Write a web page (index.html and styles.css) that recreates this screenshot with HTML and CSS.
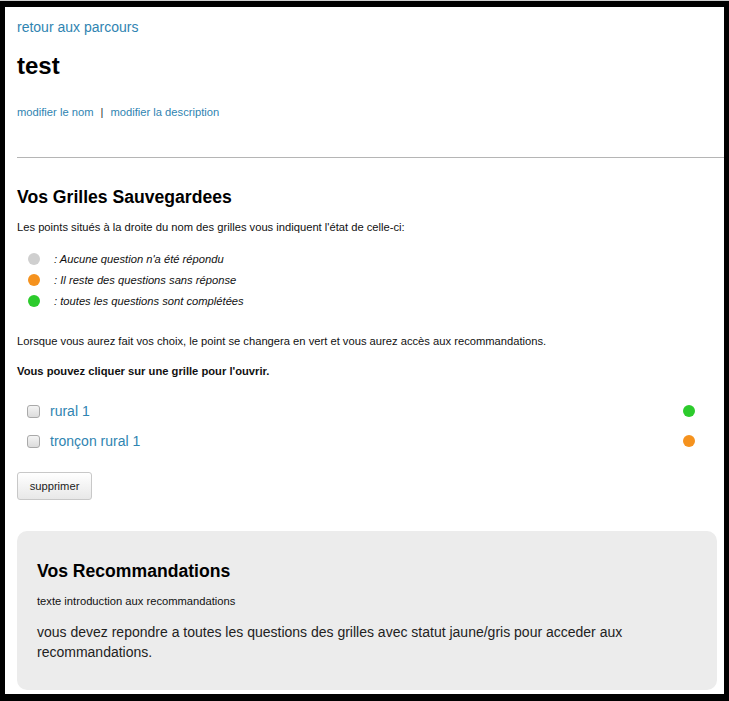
FILE: index.html
```html
<!DOCTYPE html>
<html lang="fr">
<head>
<meta charset="utf-8">
<title>test</title>
<link rel="stylesheet" href="styles.css">
</head>
<body>
<div class="frame">
  <div class="page">
    <a class="back" href="#">retour aux parcours</a>
    <h1 class="title">test</h1>
    <div class="edit-links">
      <a href="#">modifier le nom</a><span class="sep">|</span><a href="#">modifier la description</a>
    </div>
    <hr class="rule">

    <h2 class="section-title">Vos Grilles Sauvegardees</h2>
    <p class="intro">Les points situés à la droite du nom des grilles vous indiquent l'état de celle-ci:</p>
    <ul class="legend">
      <li><span class="dot dot-grey"></span><span class="legend-text">: Aucune question n'a été répondu</span></li>
      <li><span class="dot dot-orange"></span><span class="legend-text">: Il reste des questions sans réponse</span></li>
      <li><span class="dot dot-green"></span><span class="legend-text">: toutes les questions sont complétées</span></li>
    </ul>
    <p class="note">Lorsque vous aurez fait vos choix, le point se changera en vert et vous aurez accès aux recommandations.</p>
    <p class="note strong">Vous pouvez cliquer sur une grille pour l'ouvrir.</p>

    <ul class="grids">
      <li class="grid-row">
        <input type="checkbox" class="check">
        <a class="grid-link" href="#">rural 1</a>
        <span class="dot dot-green"></span>
      </li>
      <li class="grid-row">
        <input type="checkbox" class="check">
        <a class="grid-link" href="#">tronçon rural 1</a>
        <span class="dot dot-orange"></span>
      </li>
    </ul>
    <button class="btn" type="button">supprimer</button>

    <section class="reco">
      <h2 class="reco-title">Vos Recommandations</h2>
      <p class="reco-intro">texte introduction aux recommandations</p>
      <p class="reco-text">vous devez repondre a toutes les questions des grilles avec statut jaune/gris pour acceder aux recommandations.</p>
    </section>
  </div>
</div>
</body>
</html>
```
FILE: styles.css
```css
html {
  background: #cfcfcf;
}
body {
  margin: 0;
  font-family: "Liberation Sans", Arial, sans-serif;
  color: #111;
}
.frame {
  margin-top: 1px;
  border-style: solid;
  border-color: #000;
  border-width: 6px 5px 7px 5px;
  background: #fff;
  height: 687px;
  box-sizing: content-box;
  overflow: hidden;
}
.page {
  padding: 10px 7px 0 12px;
}
a {
  color: #2f84b1;
  text-decoration: none;
}
.back {
  display: block;
  font-size: 14px;
  line-height: 20px;
}
.title {
  margin: 15px 0 0;
  font-size: 24px;
  line-height: 28px;
  font-weight: bold;
  color: #000;
}
.edit-links {
  margin-top: 24px;
  font-size: 11.2px;
  line-height: 16px;
}
.sep {
  color: #333;
  margin: 0 7px;
}
.rule {
  margin: 37px -7px 0 0;
  border: 0;
  height: 1px;
  background: #b5b5b5;
}
.section-title {
  margin: 28px 0 0;
  font-size: 17.6px;
  line-height: 22px;
  font-weight: bold;
  color: #000;
}
.intro {
  margin: 11px 0 0;
  font-size: 11.2px;
  line-height: 16px;
}
.legend {
  list-style: none;
  margin: 13px 0 0;
  padding: 0 0 0 11px;
}
.legend li {
  display: flex;
  align-items: center;
  height: 21px;
  gap: 14px;
}
.legend-text {
  font-size: 11.2px;
  font-style: italic;
  line-height: 16px;
}
.dot {
  display: inline-block;
  width: 12px;
  height: 12px;
  border-radius: 50%;
  flex: none;
}
.dot-grey { background: #cfcfcf; }
.dot-orange { background: #f5921e; }
.dot-green { background: #2ccb2c; }
.note {
  margin: 22px 0 0;
  font-size: 11.2px;
  line-height: 16px;
}
.note.strong {
  margin-top: 14px;
  font-weight: bold;
}
.grids {
  list-style: none;
  margin: 17px 22px 0 0;
  padding: 0 0 0 10px;
}
.grid-row {
  display: flex;
  align-items: center;
  height: 30px;
}
.check {
  appearance: none;
  -webkit-appearance: none;
  margin: 0 10px 0 0;
  width: 13px;
  height: 13px;
  border: 1px solid #a9a9a9;
  border-radius: 3px;
  background: linear-gradient(#f4f4f4, #dcdcdc);
  box-sizing: border-box;
}
.grid-link {
  font-size: 14px;
  line-height: 20px;
  flex: 1;
}
.btn {
  display: block;
  margin-top: 16px;
  width: 75px;
  height: 28px;
  padding: 0;
  font-family: inherit;
  font-size: 11.2px;
  color: #222;
  border: 1px solid #c8c8c8;
  border-radius: 3px;
  background: linear-gradient(#ffffff, #e8e8e8);
}
.reco {
  margin-top: 31px;
  background: #ececec;
  border-radius: 10px;
  padding: 29px 20px 28px 20px;
  height: 159px;
  box-sizing: border-box;
}
.reco-title {
  margin: 0;
  font-size: 17.6px;
  line-height: 22px;
  font-weight: bold;
  color: #000;
}
.reco-intro {
  margin: 11px 0 0;
  font-size: 11.2px;
  line-height: 16px;
}
.reco-text {
  margin: 13px 0 0;
  font-size: 14px;
  line-height: 20px;
  color: #222;
}
```
